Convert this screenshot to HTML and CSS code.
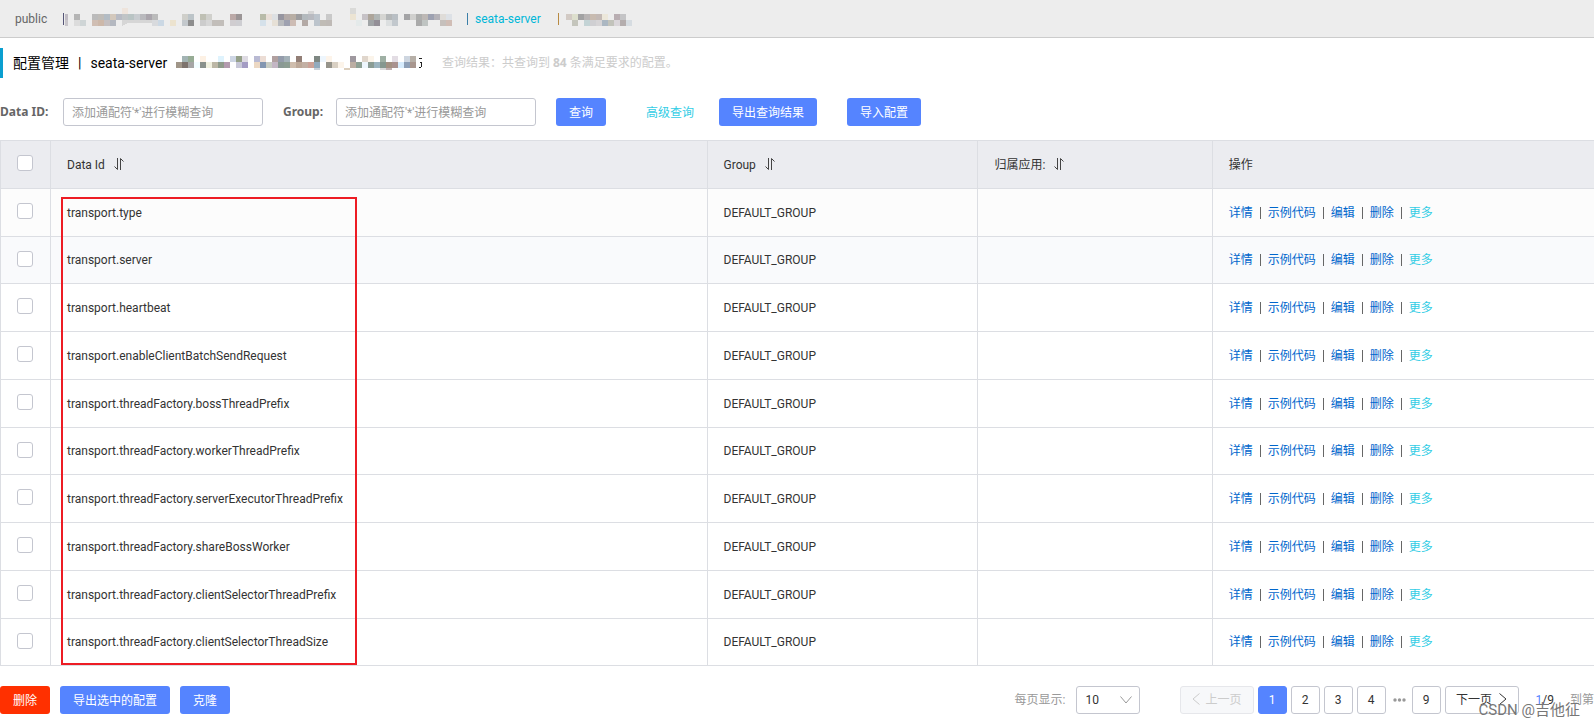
FILE: index.html
```html
<!DOCTYPE html>
<html lang="zh"><head><meta charset="utf-8"><title>配置管理</title><link rel="stylesheet" href="styles.css"></head>
<body>
<nav class="namespaces">
<a class="ns" href="#">public</a><span class="bar"></span>
<svg class="mask" width="387" height="21" viewBox="3 0 387 21" id="maskTop" aria-hidden="true"></svg>
<span class="bar"></span><a class="ns active" href="#">seata-server</a><span class="bar"></span>
<svg class="mask" width="66" height="21" viewBox="0 0 66 21" id="maskEnd" aria-hidden="true"></svg>
</nav>
<header class="title">
<h1>配置管理<span class="sep">|</span>seata-server</h1>
<svg class="mask" width="249" height="14" viewBox="0 0 249 14" id="maskTitle" aria-hidden="true"></svg>
<p>查询结果：共查询到 <strong>84</strong> 条满足要求的配置。</p>
</header>
<form class="search">
<label for="did">Data ID:</label><input id="did" type="text" placeholder="添加通配符'*'进行模糊查询">
<label for="grp">Group:</label><input id="grp" type="text" placeholder="添加通配符'*'进行模糊查询">
<button class="btn" type="button">查询</button>
<a class="more advanced" href="#">高级查询</a>
<button class="btn export" type="button">导出查询结果</button>
<button class="btn import" type="button">导入配置</button>
</form>
<main class="list">
<table>
<colgroup><col class="c1"><col class="c2"><col class="c3"><col class="c4"><col class="c5"></colgroup>
<thead><tr><th><input type="checkbox" aria-label="全选"></th>
<th>Data Id <svg class="sort" viewBox="0 0 12 14"><path d="M4.500 1V12.500L1.500 9.500M7.500 13V1.500L10.500 4.500"/></svg></th>
<th>Group <svg class="sort" viewBox="0 0 12 14"><path d="M4.500 1V12.500L1.500 9.500M7.500 13V1.500L10.500 4.500"/></svg></th>
<th>归属应用: <svg class="sort" viewBox="0 0 12 14"><path d="M4.500 1V12.500L1.500 9.500M7.500 13V1.500L10.500 4.500"/></svg></th>
<th>操作</th></tr></thead>
<tbody id="rows"></tbody>
</table>
<div class="marker"></div>
</main>
<footer class="foot">
<div class="actions"><button class="btn danger" type="button">删除</button><button class="btn" type="button">导出选中的配置</button><button class="btn" type="button">克隆</button></div>
<div class="pager">
<label for="size">每页显示:</label>
<div class="select"><select id="size"><option>10</option></select><svg viewBox="0 0 12 8"><path d="M.5 .5L6 7L11.500 .5"/></svg></div>
<button class="page prev" type="button" disabled><svg viewBox="0 0 8 12"><path d="M7.500 .5L1 6L7.500 11.500"/></svg>上一页</button>
<button class="page current" type="button">1</button><button class="page" type="button">2</button><button class="page" type="button">3</button><button class="page" type="button">4</button>
<svg class="dots" viewBox="0 0 13 4"><circle cx="2" cy="2" r="1.700"/><circle cx="6.500" cy="2" r="1.700"/><circle cx="11" cy="2" r="1.700"/></svg>
<button class="page" type="button">9</button>
<button class="page next" type="button">下一页<svg viewBox="0 0 8 12"><path d="M.5 .5L7 6L.5 11.500"/></svg></button>
<span class="count"><b>1</b>/9</span><span class="goto">到第</span>
</div>
</footer>
<div class="watermark">CSDN @吉他征</div>
<script src="app.js"></script>
</body></html>
```
FILE: styles.css
```css
*{box-sizing:border-box}
body{margin:0;background:#fff;color:#333;font:12px/18px Roboto,"Noto Sans CJK SC",sans-serif;overflow:hidden}
a{text-decoration:none;color:#06c}
button,input,select{font:inherit}
.namespaces{display:flex;align-items:center;height:38px;padding-left:15px;background:#ededed;border-bottom:1px solid #ccc}
.ns{color:#666}
.ns:first-child{width:48px}
.ns.active{width:83px;color:#00b7d8}
.bar{flex:none;width:1px;height:12px;margin-right:7px;background:#3b7fa8}
.ns:first-child+.bar{margin-right:1px;background:#557}
.ns.active+.bar{background:#b88a42}
.mask{flex:none;display:block;shape-rendering:crispEdges}
#maskTop{margin-right:15px}
.title{display:flex;align-items:center;height:30px;margin-top:10px;padding-left:10px;border-left:3px solid #0a9fd0}
h1{width:163px;margin:0;font-size:14px;font-weight:400;color:#000;white-space:nowrap}
.sep{margin:0 9px}
.title p{margin:0 0 0 17px;color:#ccc}
.title strong{font-family:"Noto Sans",sans-serif}
.search{display:flex;align-items:center;margin:20px 0 14px;white-space:nowrap}
.search label{width:63px;font-family:"Noto Sans",sans-serif;font-weight:700;color:#666}
.search input{width:200px;height:28px;margin-right:20px;padding:2px 8px 0;border:1px solid #c4c6cf;border-radius:3px;outline:0;color:#333}
.search input+label{width:53px}
::placeholder{color:#999;opacity:1}
.btn{height:28px;padding:2px 13px 0;border:0;border-radius:3px;background:#5584ff;color:#fff}
.more{color:#33cde5}
.advanced{margin:0 25px 0 40px;padding-top:2px}
.import{margin-left:30px}
.list{position:relative}
table{width:100%;border-collapse:collapse;table-layout:fixed}
.c1{width:50px}.c2{width:41.200%}.c3{width:17%}.c4{width:14.700%}
th,td{height:48px;padding:0 16px;border:1px solid #dcdee3;border-right:0;text-align:left;font-weight:400;white-space:nowrap}
tr:nth-child(4n+2) td{height:47px}
th{background:#ebecf0}
th:first-child,td:first-child{padding-bottom:3px}
tbody tr:nth-child(1){background:#fcfcfc}
tbody tr:nth-child(2){background:#f9fafc}
[type=checkbox]{appearance:none;display:block;width:16px;height:16px;margin:0;background:#fff;border:1px solid #c4c6cf;border-radius:3px}
.sort{width:12px;height:14px;margin-left:5px;vertical-align:-2px;fill:none;stroke:#444}
td i{display:inline-block;width:1px;height:12px;margin:0 7px;background:#666;vertical-align:-2px}
.marker{position:absolute;left:61px;top:57px;bottom:1px;width:296px;border:2px solid #ed1c24;pointer-events:none}
.foot{display:flex;justify-content:space-between;margin-top:20px}
.actions,.pager{display:flex;align-items:center;white-space:nowrap}
.actions{gap:10px}
.danger{background:#ff3000}
.pager{color:#999}
.select{position:relative;margin:0 40px 0 10px}
.select select{appearance:none;display:block;width:64px;height:28px;padding:0 9px;border:1px solid #c4c6cf;border-radius:3px;background:#fff;color:#333}
.select svg{position:absolute;right:8px;top:10px;width:12px;height:8px;fill:none;stroke:#999}
.page{min-width:29px;height:28px;margin-right:4px;padding:0;border:1px solid #c4c6cf;border-radius:3px;background:#fff;color:#333}
.page svg{width:8px;height:12px;fill:none;stroke:currentColor;vertical-align:-1px}
.prev,.next{width:74px}
.prev{background:#f7f8fa;border-color:#e6e7eb;color:#ccc}
.prev svg{margin-right:6px}.next svg{margin-left:7px}
.current{background:#5584ff;border-color:#5584ff;color:#fff}
.dots{width:13px;height:4px;margin:0 6px 0 3px;fill:#999}
.count{margin-left:13px;color:#333}.count b{font-weight:400;color:#5584ff}
.goto{margin-left:16px}
.watermark{position:absolute;right:14px;bottom:6px;font:15px/20px Roboto,"Noto Sans CJK SC",sans-serif;color:#777}
```
FILE: app.js
```js
const names = ["type","server","heartbeat","enableClientBatchSendRequest","threadFactory.bossThreadPrefix","threadFactory.workerThreadPrefix","threadFactory.serverExecutorThreadPrefix","threadFactory.shareBossWorker","threadFactory.clientSelectorThreadPrefix","threadFactory.clientSelectorThreadSize"];
document.getElementById("rows").innerHTML = names.map(n => `<tr><td><input type="checkbox" aria-label="transport.${n}"></td><td>transport.${n}</td><td>DEFAULT_GROUP</td><td></td><td><a href="#">详情</a><i></i><a href="#">示例代码</a><i></i><a href="#">编辑</a><i></i><a href="#">删除</a><i></i><a class="more" href="#">更多</a></td></tr>`).join("");

// Redacted names: each row is "column:colour", on a 6px grid.
const masks = {
  maskTop: [
    "10:eee4dc 48:dadad8",
    "0:c0bcc4 2:b5b5b5 5:bbbbbb 6:bfbcb8 7:b3bcc4 8:d3c8bc 9:b8bbc4 10:c0c4c6 11:b9c4c4 12:c8ccd0 13:b9b9bd 14:aaa5ac 15:bbbbbb 20:cfcfca 21:bcc4c8 23:bfc0b4 24:d0d0cc 28:bba9a7 29:9b9596 33:b8bba9 34:e9dfd8 35:dde0e3 36:9695a0 37:b3aaa8 38:b8aea4 39:9d9d9f 40:b3b9bd 41:b8bac0 42:bcc4cc 44:c9c9c9 48:ece4d3 50:c6c2c6 51:ada59a 52:b1b6b5 53:d5d5d2 54:b4b7b8 55:b9bfc4 57:a4a4a6 58:d0d0ce 59:adaead 60:bdb8b5 61:9da1b1 62:b4b2b8 63:dfdcd8 64:dde1e6",
    "0:c8c5ca 2:dcdcdc 3:cfd5d6 5:d0beb3 6:cdb8a9 7:c5bfc0 8:b4b8c0 15:d8dadd 16:cbd8e4 18:ece3cf 20:c3c8cc 21:8d8d8d 23:cccccc 24:d6d6d6 25:c2beba 26:c2beba 28:d0cdd0 29:ceced2 33:d5e1ea 35:e6e0d6 36:b8babd 37:9ea1b0 38:cdbcb4 40:b3a9a5 42:bcc4cc 43:c0bcb6 44:bfbab6 49:e4eaea 51:a0a4a6 52:938f97 54:dcdfe0 55:c2c8cd 59:aaaaaa 60:bfc4c2 63:c6c0bc 64:d0bdb5"],
  maskEnd: ["",
    "0:d2cac4 1:dddfcd 2:a2a2a3 3:b8b4b4 4:c8bbb0 5:c3b9b5 6:ece7da 8:b9aeb2 9:c4c4c6",
    "1:c4c5bc 3:c3d3d5 4:cfcfd2 5:d6d4d6 6:abb7c2 7:c2c3bb 8:dad6da 9:b4adad 10:d6dce1"],
  maskTitle: [
    "1:a3b4b4 2:97ac95 4:fdf1e4 7:dff3fd 9:ced6e4 10:95a089 11:dedbe3 13:b9bad3 14:ecddd5 16:b1a0a0 17:949cab 18:a4b1b8 20:927e76 23:7e8782 24:eef6fd 25:fdf4ea 29:9f989f 31:e0d6cc 32:fbf4ea 34:9fb0a4 36:e3dde4 38:ced6e0 39:b7b0a8",
    "0:a09688 1:7d736d 2:a5a5a5 3:f2fdff 4:8a918c 5:f0f0df 6:bcb7a6 7:8f9b8b 8:b39baf 10:c8c8d8 11:a49cc4 13:ecd8c3 14:8396b1 15:c8ccc3 16:c3b6c4 17:8a9994 18:8c9d92 19:cfbdad 20:bda898 21:c3b0a4 22:cda298 23:92aabd 25:96948b 26:d9d0c3 27:fcf4ea 29:bcaea3 30:8ea094 31:eef6fd 32:8b9c94 33:9cb4bf 34:86988f 35:a39182 36:a9928f 37:d7ecfd 38:8ea0b8 39:a9978f",
    "23:ccd2da 28:dccfbd 34:dadada 35:c0b0b0"]
};
const extras = {
  maskTop: '<path fill="#d6d6d6" d="M60 12h30v3H66l-6 3zM246 3h6v3h-6z"/>',
  maskEnd: "",
  maskTitle: '<path fill="none" stroke="#222" d="M243 2.500h3M244 6.500q2 0 2 2.500t-3 2.500"/>'
};
for (const [id, rows] of Object.entries(masks)) {
  document.getElementById(id).innerHTML = rows.map((row, y) => row.split(" ").filter(Boolean).map(c => {
    const [x, colour] = c.split(":");
    return `<rect x="${x * 6}" y="${y * 6}" width="6" height="6" fill="#${colour}"/>`;
  }).join("")).join("") + extras[id];
}
```
